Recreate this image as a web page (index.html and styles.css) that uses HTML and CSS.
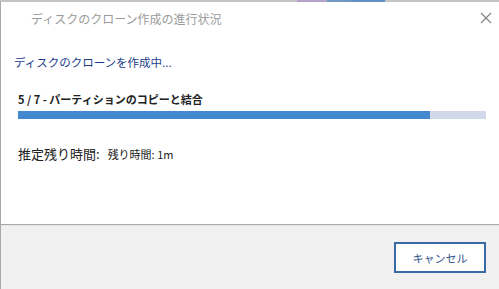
FILE: index.html
```html
<!DOCTYPE html>
<html lang="ja">
<head>
    <meta charset="UTF-8">
    <title>ディスクのクローン作成の進行状況</title>
    <link rel="stylesheet" href="styles.css">
</head>
<body>

<div class="top-strip">
    <span class="strip-seg seg-purple"></span>
    <span class="strip-seg seg-blue"></span>
    <span class="strip-seg seg-blue2"></span>
</div>

<div class="dialog">
    <div class="title-bar">
        <span class="title">ディスクのクローン作成の進行状況</span>
        <span class="close">
            <svg width="12" height="12" viewBox="0 0 12 12">
                <path d="M1 1 L11 11 M11 1 L1 11" stroke="#808080" stroke-width="1.1" fill="none"/>
            </svg>
        </span>
    </div>

    <div class="content">
        <h1 class="heading">ディスクのクローンを作成中...</h1>
        <div class="step">5 / 7 - パーティションのコピーと結合</div>
        <div class="progress">
            <div class="progress-fill" style="width: 88%"></div>
        </div>
        <div class="eta">
            <span class="eta-label">推定残り時間:</span>
            <span class="eta-value">残り時間: 1m</span>
        </div>
    </div>

    <div class="footer">
        <button class="btn-cancel">キャンセル</button>
    </div>
</div>

</body>
</html>
```

FILE: styles.css
```css
/* Global */
body {
    margin: 0;
    font-family: 'Noto Sans CJK JP', 'Noto Sans', sans-serif;
    background: #fff;
    width: 499px;
    height: 289px;
    overflow: hidden;
}

.top-strip {
    height: 2px;
    background: #c4c4c4;
    display: flex;
    padding-left: 297px;
}

.strip-seg {
    height: 2px;
    display: block;
}

.seg-purple {
    width: 30px;
    background: #b6a3cb;
}

.seg-blue {
    width: 24px;
    background: #6f98c4;
}

.seg-blue2 {
    width: 34px;
    background: #5f8fc3;
}

.dialog {
    border-left: 1px solid #a8a8a8;
    height: 287px;
    display: flex;
    flex-direction: column;
    box-sizing: border-box;
}

.title-bar {
    height: 32px;
    display: flex;
    align-items: center;
    justify-content: space-between;
    padding: 0 7px 0 30px;
}

.title {
    font-size: 12px;
    color: #9a9a9a;
}

.close {
    display: flex;
}

.content {
    flex: 1;
    padding: 19px 13px 0 13px;
}

.heading {
    margin: 0;
    font-size: 11.5px;
    font-weight: normal;
    color: #1c3c8c;
    line-height: 18px;
}

.step {
    margin: 20px 0 0 4px;
    font-size: 11px;
    font-weight: bold;
    color: #222;
    line-height: 16px;
}

.progress {
    margin: 4px 0 0 4px;
    width: 468px;
    height: 8px;
    background: #d2d9ea;
}

.progress-fill {
    height: 100%;
    background: #4488cf;
}

.eta {
    margin: 25px 0 0 4px;
    display: flex;
    align-items: baseline;
    gap: 8px;
    color: #222;
}

.eta-label {
    font-size: 13px;
}

.eta-value {
    font-size: 11px;
}

.footer {
    height: 65px;
    border-top: 1px solid #a8a8a8;
    box-shadow: inset 0 1px 0 #e2e6ee;
    background: #f0f0f0;
    display: flex;
    justify-content: flex-end;
    align-items: flex-start;
    padding: 17px 13px 0 0;
    box-sizing: border-box;
}

.btn-cancel {
    width: 92px;
    height: 31px;
    border: 2px solid #3a6aa3;
    background: #fff;
    color: #33558a;
    font-family: 'Noto Sans CJK JP', 'Noto Sans', sans-serif;
    font-size: 11px;
    padding: 0;
}
```
